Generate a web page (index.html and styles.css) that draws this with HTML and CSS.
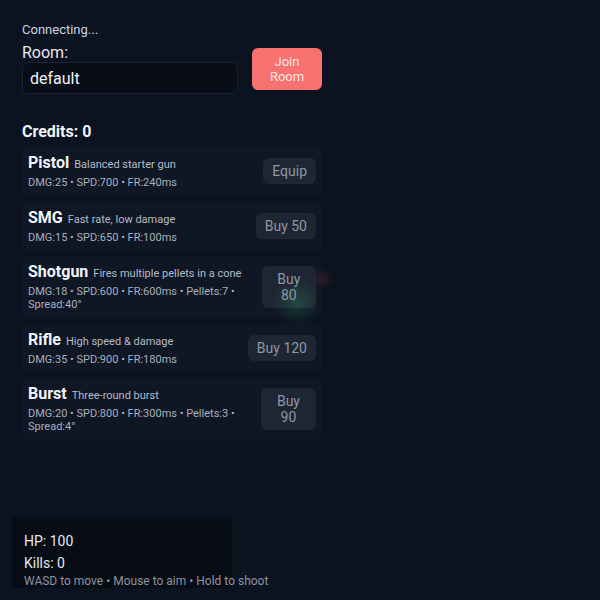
FILE: index.html
```html
<!DOCTYPE html>
<html lang="en">
<head>
<meta charset="utf-8">
<title>Arena</title>
<link rel="stylesheet" href="styles.css">
</head>
<body>
<div class="game">
  <div class="glow glow-green"></div>
  <div class="glow glow-red"></div>

  <div class="panel">
    <div class="status">Connecting...</div>
    <div class="room-row">
      <div class="room-field">
        <label class="room-label" for="room">Room:</label>
        <input id="room" class="room-input" type="text" value="default">
      </div>
      <button class="join-btn">Join Room</button>
    </div>

    <div class="shop">
      <div class="credits">Credits: 0</div>
      <div class="items">
        <div class="item">
          <div class="info">
            <div class="name"><b>Pistol</b><span class="desc">Balanced starter gun</span></div>
            <div class="stats">DMG:25 • SPD:700 • FR:240ms</div>
          </div>
          <button class="item-btn">Equip</button>
        </div>
        <div class="item">
          <div class="info">
            <div class="name"><b>SMG</b><span class="desc">Fast rate, low damage</span></div>
            <div class="stats">DMG:15 • SPD:650 • FR:100ms</div>
          </div>
          <button class="item-btn">Buy 50</button>
        </div>
        <div class="item">
          <div class="info">
            <div class="name"><b>Shotgun</b><span class="desc">Fires multiple pellets in a cone</span></div>
            <div class="stats">DMG:18 • SPD:600 • FR:600ms • Pellets:7 • Spread:40°</div>
          </div>
          <button class="item-btn">Buy 80</button>
        </div>
        <div class="item">
          <div class="info">
            <div class="name"><b>Rifle</b><span class="desc">High speed &amp; damage</span></div>
            <div class="stats">DMG:35 • SPD:900 • FR:180ms</div>
          </div>
          <button class="item-btn">Buy 120</button>
        </div>
        <div class="item">
          <div class="info">
            <div class="name"><b>Burst</b><span class="desc">Three-round burst</span></div>
            <div class="stats">DMG:20 • SPD:800 • FR:300ms • Pellets:3 • Spread:4°</div>
          </div>
          <button class="item-btn">Buy 90</button>
        </div>
      </div>
    </div>
  </div>

  <div class="hud">
    <div class="hud-line">HP: 100</div>
    <div class="hud-line">Kills: 0</div>
    <div class="help">WASD to move • Mouse to aim • Hold to shoot</div>
  </div>
</div>
</body>
</html>
```

FILE: styles.css
```css
* { box-sizing: border-box; }

html, body {
  margin: 0;
  padding: 0;
  height: 100%;
}

body {
  background: #0b1220;
  color: #e5e7eb;
  font-family: Roboto, "Noto Sans", "Liberation Sans", sans-serif;
  overflow: hidden;
}

.game {
  position: relative;
  width: 100%;
  height: 100%;
}

.glow {
  position: absolute;
  border-radius: 50%;
}

.glow-green {
  left: 272px;
  top: 278px;
  width: 50px;
  height: 50px;
  background: radial-gradient(circle, rgba(52, 211, 120, 0.18) 0%, rgba(52, 211, 120, 0.06) 45%, rgba(52, 211, 120, 0) 70%);
}

.glow-red {
  left: 312px;
  top: 268px;
  width: 22px;
  height: 22px;
  background: radial-gradient(circle, rgba(248, 90, 90, 0.14) 0%, rgba(248, 90, 90, 0) 70%);
}

.panel {
  position: absolute;
  left: 12px;
  top: 12px;
  width: 320px;
  padding: 10px;
}

.status {
  font-size: 13px;
  color: #cbd5e1;
  line-height: 15px;
}

.room-row {
  margin-top: 6px;
  display: flex;
  align-items: center;
  gap: 14px;
}

.room-field {
  display: flex;
  flex-direction: column;
  width: 216px;
}

.room-label {
  font-size: 16px;
  line-height: 19px;
  color: #e5e7eb;
}

.room-input {
  width: 216px;
  height: 32px;
  margin: 0;
  padding: 0 7px;
  font-family: inherit;
  font-size: 16px;
  color: #f1f5f9;
  background: #080d17;
  border: 1px solid #1c2535;
  border-radius: 6px;
  outline: none;
}

.join-btn {
  width: 70px;
  padding: 6px 8px;
  font-family: inherit;
  font-size: 13px;
  line-height: 15px;
  color: #ffe4e4;
  background: #f87171;
  border: none;
  border-radius: 6px;
  text-align: center;
}

.shop {
  margin: 19px -7px 0;
  padding: 8px 7px 0;
  border-top: 1px solid rgba(255, 255, 255, 0.018);
}

.credits {
  font-size: 16px;
  font-weight: 700;
  line-height: 19px;
  color: #f1f5f9;
}

.items {
  margin-top: 6px;
  display: flex;
  flex-direction: column;
  gap: 6.5px;
}

.item {
  display: flex;
  align-items: center;
  justify-content: space-between;
  gap: 8px;
  padding: 6px;
  background: rgba(255, 255, 255, 0.018);
  border-radius: 6px;
}

.info {
  min-width: 0;
}

.name {
  font-size: 16px;
  line-height: 19px;
  height: 19px;
  white-space: nowrap;
}

.name b {
  font-weight: 700;
  color: #f1f5f9;
}

.desc {
  margin-left: 5px;
  font-size: 11px;
  line-height: 1;
  color: #b4bcc8;
}

.stats {
  margin-top: 4px;
  font-size: 11px;
  line-height: 13px;
  color: #a9b1bd;
}

.item-btn {
  padding: 5px 9px;
  font-family: inherit;
  font-size: 14px;
  line-height: 16px;
  color: #8e97a6;
  background: rgba(255, 255, 255, 0.07);
  border: none;
  border-radius: 6px;
  text-align: center;
}

.hud {
  position: absolute;
  left: 12px;
  bottom: 12px;
  width: 220px;
  padding: 13px 12px 0;
  background: rgba(0, 0, 0, 0.32);
}

.hud-line {
  font-size: 14px;
  line-height: 22px;
  color: #e5e7eb;
}

.help {
  font-size: 12px;
  line-height: 14px;
  color: #8d95a2;
  white-space: nowrap;
}
```
